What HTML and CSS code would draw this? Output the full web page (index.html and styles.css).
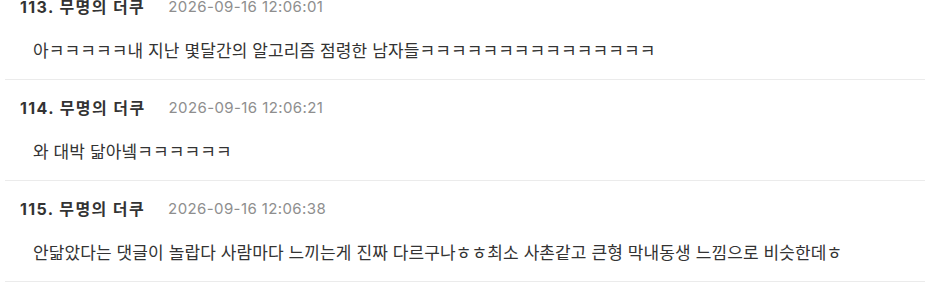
FILE: index.html
```html
<!DOCTYPE html>
<html lang="ko">
<head>
    <meta charset="UTF-8">
    <title>댓글</title>
    <link rel="stylesheet" href="styles.css">
</head>
<body>
    <ul class="comments">
        <li class="comment">
            <div class="comment_head">
                <span class="comment_no">113. 무명의 더쿠</span>
                <span class="comment_date">2026-09-16 12:06:01</span>
            </div>
            <p class="comment_body">아ㅋㅋㅋㅋㅋ내 지난 몇달간의 알고리즘 점령한 남자들ㅋㅋㅋㅋㅋㅋㅋㅋㅋㅋㅋㅋㅋㅋㅋ</p>
        </li>
        <li class="comment">
            <div class="comment_head">
                <span class="comment_no">114. 무명의 더쿠</span>
                <span class="comment_date">2026-09-16 12:06:21</span>
            </div>
            <p class="comment_body">와 대박 닮아넼ㅋㅋㅋㅋㅋㅋ</p>
        </li>
        <li class="comment">
            <div class="comment_head">
                <span class="comment_no">115. 무명의 더쿠</span>
                <span class="comment_date">2026-09-16 12:06:38</span>
            </div>
            <p class="comment_body">안닮았다는 댓글이 놀랍다 사람마다 느끼는게 진짜 다르구나ㅎㅎ최소 사촌같고 큰형 막내동생 느낌으로 비슷한데ㅎ</p>
        </li>
    </ul>
</body>
</html>
```

FILE: styles.css
```css
*{
    margin: 0;
    padding: 0;
}
html{
    background-color: #fff;
}
body{
    font-family: Inter, "Noto Sans CJK KR", sans-serif;
    color: #333;
    overflow: hidden;
}
ul{
    list-style: none;
}
.comments{
    margin-top: -21px;
}
.comment{
    margin-left: 5px;
    padding: 18px 0 17px 15px;
    border-bottom: 1px solid #ebebeb;
}
.comment_head{
    display: flex;
    align-items: center;
    gap: 23px;
    height: 20px;
    line-height: 20px;
}
.comment_no{
    font-size: 16px;
    font-weight: bold;
    letter-spacing: 1.4px;
    color: #333;
}
.comment_date{
    font-size: 15px;
    letter-spacing: 0.4px;
    color: #8e8e8e;
}
.comment_body{
    margin-top: 23px;
    padding-left: 13px;
    font-size: 17px;
    line-height: 22px;
    letter-spacing: 0.1px;
    color: #333;
}
```
